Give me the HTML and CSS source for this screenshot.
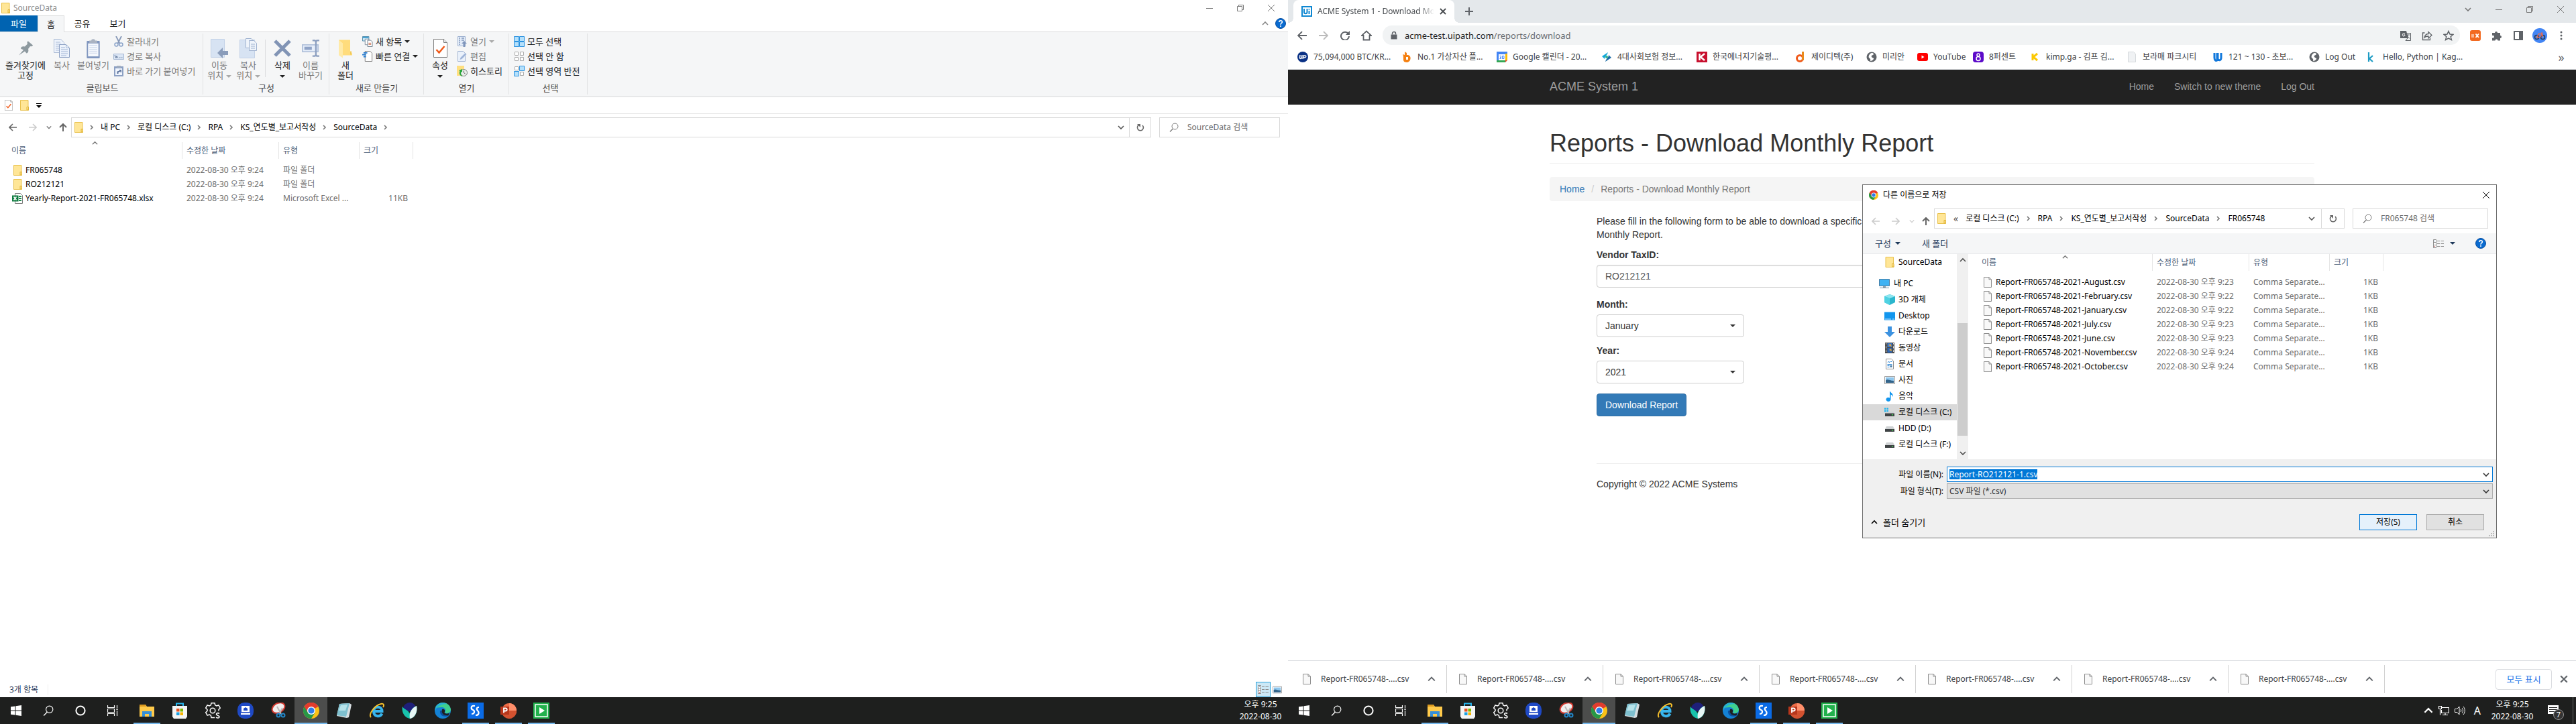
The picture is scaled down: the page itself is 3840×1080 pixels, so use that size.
FILE: index.html
```html
<!DOCTYPE html>
<html lang="ko">
<head>
<meta charset="utf-8">
<title>ACME System 1 - Download Monthly Report</title>
<link rel="stylesheet" href="styles.css">
</head>
<body>
<svg class="sprite" aria-hidden="true">
  <symbol id="folder" viewBox="0 0 13 16"><path d="M.5 .5h11.500v11h.5v4H.5z" fill="#ffe697" stroke="#e9c14c"/><path d="M10 15V10.500h2.500V15z" fill="#ffe28a" stroke="#e0b438"/></symbol>
  <symbol id="doc" viewBox="0 0 12 16"><path d="M.5 .5h7.500l3.500 3.500v11.500H.5z" fill="#f8f8f8" stroke="#8c8c8c"/><path d="M8 .5V4h3.500" fill="none" stroke="#8c8c8c"/></symbol>
  <symbol id="excel" viewBox="0 0 16 16"><path d="M4.500 .5h8l3 3v12h-11z" fill="#fff" stroke="#7a7a7a"/><path d="M10 5h4M10 8h4M10 11h4" stroke="#1d8a50" stroke-width="2"/><path d="M0 3.500h9.500v9H0z" fill="#107c41"/><path d="M2.500 5.500l4 5M6.500 5.500l-4 5" stroke="#fff" stroke-width="1.500"/></symbol>
  <symbol id="check" viewBox="0 0 21 28"><path d="M.5 .5h15l5 5v22H.5z" fill="#fff" stroke="#7d7d7d"/><path d="M15.500 .5v5h5" fill="#e6e6e6" stroke="#7d7d7d"/><path d="M4.500 16l4 4.500 8-9.500" fill="none" stroke="#f05a1a" stroke-width="2.500"/></symbol>
  <symbol id="pin" viewBox="0 0 21 21"><path d="M0 21l7-8-4-2c0-3 3-4 6-3l4-4c-1-2-.5-4 1-4l7 6c-.5 1.500-2 2-4 1.500l-3 4c1 3 0 6-2.500 6.500L9 15z" fill="#8d999f"/></symbol>
  <symbol id="copy" viewBox="0 0 24 28"><path d="M.5 .5h10l5 5v15H.5z" fill="#eef3fb" stroke="#a9b9d4"/><path d="M3 5h7M3 8h8M3 11h5M3 14h5M3 17h5" stroke="#a9bbd8"/><path d="M8.500 8.500h10l5 5v14h-15z" fill="#edf3fc" stroke="#8da1c4"/><path d="M18.500 8.500v5h5M11 13h6M11 16h10M11 19h10M11 22h10M11 25h8" fill="none" stroke="#9fb2d4"/></symbol>
  <symbol id="paste" viewBox="0 0 20 30"><rect y="3" width="20" height="27" rx="1" fill="#8096bf"/><path d="M2 7h16v20H2z" fill="#f5f8fd"/><path d="M4 2.500h3c0-3 6-3 6 0h3v4H4z" fill="#aab3c2"/><path d="M4 10h12M4 13h12M4 16h12M4 19h12M4 22h12" stroke="#cad6e9"/></symbol>
  <symbol id="cut" viewBox="0 0 14 16"><path d="M3 0l5.500 11M11 0L5.500 11" stroke="#8899b8" stroke-width="1.800"/><circle cx="3.500" cy="12.500" r="2.500" fill="none" stroke="#8ba3c9" stroke-width="1.500"/><circle cx="10.500" cy="12.500" r="2.500" fill="none" stroke="#8ba3c9" stroke-width="1.500"/></symbol>
  <symbol id="pathcopy" viewBox="0 0 16 16"><path d="M.5 4.500h15v8H.5z" fill="#dce7f6" stroke="#a3b6d3"/><path d="M2 6l2 4.500 1-3 2 3M9 10h1.500M12 10h1.500" fill="none" stroke="#5d7396"/></symbol>
  <symbol id="shortcut" viewBox="0 0 14 16"><rect y="1" width="14" height="15" fill="#8ca0c3"/><path d="M2 4h10v10H2z" fill="#f0f5fd"/><path d="M4 0h6v3H4z" fill="#a1adbf"/><path d="M4.500 12V8.500L8 7.500V6h3v4H9.500V8.500L6.500 10v2z" fill="#60779f"/></symbol>
  <symbol id="moveto" viewBox="0 0 26 28"><path d="M.5 .5h20v27H.5z" fill="#d7e3f3" stroke="#c2d1e7"/><path d="M10 21l8-8v5h8v6h-8v5z" fill="#8a9cba"/></symbol>
  <symbol id="copyto" viewBox="0 0 26 30"><path d="M.5 2.500h22v27H.5z" fill="#d7e3f3" stroke="#c2d1e7"/><path d="M9.500 .5h8l3 3v11h-11z" fill="#eff4fb" stroke="#9eb1cf"/><path d="M14.500 3.500h7l4 4v11h-11z" fill="#eff4fb" stroke="#9eb1cf"/><path d="M17 9h6M17 12h6M17 15h6" stroke="#9eb1cf"/></symbol>
  <symbol id="delete" viewBox="0 0 26 26"><path d="M2 2l22 22M24 2L2 24" stroke="#8194b5" stroke-width="5"/></symbol>
  <symbol id="rename" viewBox="0 0 28 28"><path d="M1 8.500h25v11H1z" fill="#e6eefa" stroke="#b2c2db" stroke-width="2"/><path d="M4 11.500h12v5H4z" fill="#8fa3c7"/><path d="M17 1.500h4l1.500 2 1.500-2h4M17 26.500h4l1.500-2 1.500 2h4M22.500 3v22" fill="none" stroke="#8c9fc0" stroke-width="2.500"/></symbol>
  <symbol id="newfolder" viewBox="0 0 20 28"><path d="M0 1h17v20h3v3H5z" fill="#ffdc7c"/><path d="M0 1l6 5v22l-6-4z" fill="#ffeaa8"/><path d="M17 18h2v5h-2z" fill="#f2c957"/></symbol>
  <symbol id="newitem" viewBox="0 0 17 17"><path d="M.5 .5h10v7H.5z" fill="#cfe9f7" stroke="#4c88a8"/><path d="M1 1h9v2H1z" fill="#3f9ed0"/><path d="M4.500 4.500h6v9h-6z" fill="#fff" stroke="#7b8b99"/><path d="M8.500 6.500h5l2.500 2.500v7.500H8.500z" fill="#fff" stroke="#6f7f8c"/><path d="M10 11h4M10 13h4" stroke="#c65b36"/></symbol>
  <symbol id="quick" viewBox="0 0 17 17"><path d="M4.500 .5h8l3 3v13h-11z" fill="#fff" stroke="#777"/><path d="M2 3h6M0 6h6M2 9h4" stroke="#1c77d0" stroke-width="2"/></symbol>
  <symbol id="openi" viewBox="0 0 14 16"><path d="M.5 .5h11v14H.5z" fill="#e3ecf9" stroke="#9db0d0"/><path d="M2 3h2M6 3h4M2 6h2M6 6h4M2 9h2M2 12h2" stroke="#8196bb" stroke-width="1.500"/><path d="M10 7l4 4h-2.500v5h-3v-5H6z" fill="#7f95bb"/></symbol>
  <symbol id="edit" viewBox="0 0 14 16"><path d="M.5 .5h8l3 3v12H.5z" fill="#eaf1fb" stroke="#a2b4d2"/><path d="M3.500 13l1-3 7-7 2 2-7 7z" fill="#9fb4d8"/></symbol>
  <symbol id="history" viewBox="0 0 16 16"><path d="M0 0h11v15H0z" fill="#ffdf80"/><circle cx="10.500" cy="10.500" r="5" fill="#e9eeea" stroke="#7c8580"/><path d="M10.500 7.500v3l2 1.500" fill="none" stroke="#555"/><path d="M9 16c-5-.5-6-5-4.500-8L3 7l5-2v5l-1.500-1C5.500 12 6 14 9 16z" fill="#28a83e"/></symbol>
  <symbol id="selall" viewBox="0 0 16 16"><path d="M.5 .5h7v7h-7zM8.500 .5h7v7h-7zM.5 8.500h7v7h-7zM8.500 8.500h7v7h-7z" fill="#b5e0fb" stroke="#2b93e0"/></symbol>
  <symbol id="selnone" viewBox="0 0 16 16"><path d="M1.500 1.500h5v5h-5zM9.500 1.500h5v5h-5zM1.500 9.500h5v5h-5zM9.500 9.500h5v5h-5z" fill="#fff" stroke="#a9a9a9"/></symbol>
  <symbol id="selinv" viewBox="0 0 16 16"><path d="M1.500 1.500h5v5h-5zM9.500 9.500h5v5h-5z" fill="#fff" stroke="#a9a9a9"/><path d="M8.500 .5h7v7h-7zM.5 8.500h7v7h-7z" fill="#b5e0fb" stroke="#2b93e0"/></symbol>
  <symbol id="left" viewBox="0 0 12 12"><path d="M6 1L1 6l5 5M1 6h11" fill="none" stroke="currentColor" stroke-width="1.600"/></symbol>
  <symbol id="right" viewBox="0 0 12 12"><path d="M6 1l5 5-5 5M11 6H0" fill="none" stroke="currentColor" stroke-width="1.600"/></symbol>
  <symbol id="up" viewBox="0 0 12 12"><path d="M1 6l5-5 5 5M6 1v11" fill="none" stroke="currentColor" stroke-width="2"/></symbol>
  <symbol id="down" viewBox="0 0 10 10"><path d="M1 3l4 4 4-4" fill="none" stroke="currentColor" stroke-width="1.600"/></symbol>
  <symbol id="upc" viewBox="0 0 10 10"><path d="M1 7l4-4 4 4" fill="none" stroke="currentColor" stroke-width="1.600"/></symbol>
  <symbol id="sep" viewBox="0 0 6 8"><path d="M1 1l3 3-3 3" fill="none" stroke="#777" stroke-width="1.600"/></symbol>
  <symbol id="tri" viewBox="0 0 8 4"><path d="M0 0h8L4 4z" fill="currentColor"/></symbol>
  <symbol id="refresh" viewBox="0 0 12 12"><path d="M3.500 2.500A4.500 4.500 0 1 0 9 3" fill="none" stroke="#666" stroke-width="1.600"/><path d="M1 1h5v5z" fill="#666"/></symbol>
  <symbol id="search" viewBox="0 0 14 14"><circle cx="8.500" cy="5.500" r="4.500" fill="none" stroke="currentColor"/><path d="M5.500 9L1 13.500" stroke="currentColor" stroke-width="1.200"/></symbol>
  <symbol id="close" viewBox="0 0 10 10"><path d="M0 0l10 10M10 0L0 10" stroke="currentColor"/></symbol>
  <symbol id="closeb" viewBox="0 0 10 10"><path d="M1 1l8 8M9 1L1 9" stroke="currentColor" stroke-width="1.800"/></symbol>
  <symbol id="min" viewBox="0 0 10 10"><path d="M0 5.500h10" stroke="currentColor"/></symbol>
  <symbol id="restore" viewBox="0 0 10 10"><path d="M.5 2.500h7v7h-7zM2.500 2.500v-2h7v7h-2" fill="none" stroke="currentColor"/></symbol>
  <symbol id="help" viewBox="0 0 16 16"><circle cx="8" cy="8" r="7.500" fill="#0a6bd0" stroke="#0b4f9e"/><path d="M5.800 6c0-3 4.600-3 4.600-.3C10.400 7.500 8 7.500 8 9.800M8 11v2" fill="none" stroke="#fff" stroke-width="1.600"/></symbol>
  <symbol id="viewlist" viewBox="0 0 16 13"><path d="M.5 .5h4v12h-4zM.5 4.500h4M.5 8.500h4" fill="#fff" stroke="#8b8b8b"/><path d="M6 2.500h4M11.500 2.500H16M6 6.500h4M11.500 6.500H16M6 10.500h4M11.500 10.500H16" stroke="#8b8b8b"/><path d="M2 2h1v1H2z" fill="#3a87c8"/><path d="M2 10h1v1H2z" fill="#d33"/></symbol>
  <symbol id="picture" viewBox="0 0 16 12"><path d="M.5 .5h15v11H.5z" fill="#fff" stroke="#9b9b9b"/><path d="M2 2h12v8H2z" fill="#8fc7ee"/><path d="M2 6c3-2 6 1 12 1v3H2z" fill="#33648a"/></symbol>
  <symbol id="pc" viewBox="0 0 16 16"><path d="M.5 1.500h15v10H.5z" fill="#3eb2f3" stroke="#4b7ea3"/><path d="M6 12h4v2H6z" fill="#9aa6ae"/><path d="M1 14.500h14" stroke="#6d8ea5"/></symbol>
  <symbol id="cube" viewBox="0 0 16 16"><path d="M8 0l8 3v9l-8 4-8-4V3z" fill="#2bb6cd"/><path d="M8 0l8 3-8 3-8-3z" fill="#8ee6f0"/><path d="M0 3l8 3v10l-8-4z" fill="#4fd2e2"/></symbol>
  <symbol id="desk" viewBox="0 0 16 16"><path d="M0 2.500h16v12H0z" fill="#1296ee"/><path d="M1 13h9M12 13h3" stroke="#bfe4ff"/></symbol>
  <symbol id="dl" viewBox="0 0 16 16"><path d="M5 0h6v8h5l-8 8-8-8h5z" fill="#3c92e0"/></symbol>
  <symbol id="video" viewBox="0 0 14 16"><path d="M0 0h14v16H0z" fill="#4a4a4a"/><path d="M3.500 1h7v6h-7z" fill="#3e78c7"/><path d="M3.500 8h7v7h-7z" fill="#2d66b3"/><path d="M5 4l3-2 2 4zM6 11l3-2 1 4z" fill="#f2a72e"/><path d="M1.500 1v14M12.500 1v14" stroke="#fff" stroke-dasharray="1 1"/></symbol>
  <symbol id="docs" viewBox="0 0 12 16"><path d="M.5 .5h8l3 3v12H.5z" fill="#fff" stroke="#8c8c8c"/><path d="M3 6l1.500-2 1.500 2M7 4.500h2.500M2.500 8.500h7M2.500 10.500h3M2.500 12.500h3" fill="none" stroke="#2f87d6"/><path d="M6.500 10h3v3h-3z" fill="#4a7ea8"/></symbol>
  <symbol id="music" viewBox="0 0 12 16"><path d="M6 0c1 3 6 4 4.500 9C10 6.500 9 6 7.500 5.500V13a3.500 3 0 1 1-1.500-2.500z" fill="#1296ee"/></symbol>
  <symbol id="drive" viewBox="0 0 16 16"><path d="M3 5h10l2 4H1z" fill="#cfd2d4"/><path d="M1 9h14v4H1z" fill="#3f4345"/><path d="M11 10h2v1.500h-2z" fill="#3fd34c"/></symbol>
  <symbol id="cdrive" viewBox="0 0 16 16"><path d="M0 1.500h2.500V4H0zM3.500 1.500H6V4H3.500zM0 5h2.500v2.500H0zM3.500 5H6v2.500H3.500z" fill="#1fb5ee"/><path d="M4 7h9l2 3H1z" fill="#cfd2d4"/><path d="M1 9.500h14V14H1z" fill="#3f4345"/><path d="M11 11h2v1.500h-2z" fill="#3fd34c"/></symbol>
  <symbol id="chrome" viewBox="0 0 24 24"><circle cx="12" cy="12" r="12" fill="#fbc116"/><path d="M12 12L1.600 6A12 12 0 0 1 22.400 6z" fill="#e33b2e"/><path d="M12 12L1.600 6A12 12 0 0 0 12 24l5.500-9z" fill="#279847"/><path d="M12 6h10.400A12 12 0 0 0 1.600 6L7 15z" fill="#e33b2e"/><circle cx="12" cy="12" r="6" fill="#fff"/><circle cx="12" cy="12" r="4.600" fill="#2f7de9"/></symbol>
  <symbol id="globe" viewBox="0 0 16 16"><circle cx="8" cy="8" r="7.500" fill="#5f6368"/><path d="M8 2c3 0 4 2 2 3S7 6 8 8s4 1 3 3-3 3-5 3c1-3-1-4-2-5s0-6 4-7z" fill="#fff"/></symbol>
  <symbol id="win" viewBox="0 0 16 16"><path d="M0 2.300L6.500 1.400v6.100H0zM7.500 1.200L16 0v7.500H7.500zM0 8.500h6.500v6.100L0 13.700zM7.500 8.500H16V16l-8.500-1.200z" fill="#fff"/></symbol>
  <symbol id="cortana" viewBox="0 0 16 16"><circle cx="8" cy="8" r="6.600" fill="none" stroke="#fff" stroke-width="2"/></symbol>
  <symbol id="taskview" viewBox="0 0 16 16"><path d="M.5 0v3.500h10V0M.5 16v-3.500h10V16M.5 5.500h10v5H.5zM14.500 0v4M14.500 8v8" fill="none" stroke="#fff" stroke-width="1.200"/><path d="M13.500 5h2v2h-2z" fill="#fff"/></symbol>
  <symbol id="explorer" viewBox="0 0 24 24"><path d="M1 3h9l2 3h11v15H1z" fill="#ffca4b"/><path d="M1 3h9l1 3H1z" fill="#dc9a1e"/><path d="M5 21v-8h14v8h-4v-4H9v4z" fill="#378fd8"/></symbol>
  <symbol id="store" viewBox="0 0 24 24"><path d="M7 5V1.500h10V5" fill="none" stroke="#27b6ee" stroke-width="2"/><path d="M1 5h22v16l-2 3H3l-2-3z" fill="#f5f5f5"/><path d="M7 9h4.500v4.500H7z" fill="#e8501f"/><path d="M12.500 9H17v4.500h-4.500z" fill="#7cb800"/><path d="M7 14.500h4.500V19H7z" fill="#1ba1e2"/><path d="M12.500 14.500H17V19h-4.500z" fill="#f8b500"/></symbol>
  <symbol id="gear" viewBox="0 0 24 24"><path d="M15 22.500h-5l-.7-3.300-2-1.200-3.200 1-2.400-4.200L4 12.500v-2L1.700 8.200 4 4l3.300 1 2-1.200L10 .8h5l.7 3 2 1.200 3.200-1 2.400 4.200-2.300 2.300v2" fill="none" stroke="#fff" stroke-width="1.500"/><circle cx="12" cy="12" r="3.800" fill="none" stroke="#fff" stroke-width="1.500"/><path d="M22 16.500c-2-1.500-4.500-.8-4.500 1s4.500 1.500 4.500 3.700-3 2.300-5 1" fill="none" stroke="#fff" stroke-width="1.600"/></symbol>
  <symbol id="bluepc" viewBox="0 0 24 24"><rect width="24" height="24" rx="10" fill="#1f49c4"/><path d="M6 5h12v9H6zM5 15.500h14V18H5z" fill="#fff"/><path d="M9 9l3-2 3 2v3H9z" fill="#1f49c4"/></symbol>
  <symbol id="snip" viewBox="0 0 24 24"><ellipse cx="12" cy="8" rx="10" ry="7" transform="rotate(-30 12 8)" fill="#f1eeee" stroke="#d33a31" stroke-width="2"/><path d="M10 6l6 11M18 8l-5 9" stroke="#b9b9b9" stroke-width="2"/><circle cx="12" cy="19" r="2.500" fill="none" stroke="#2387c9" stroke-width="2"/><circle cx="19" cy="19" r="2.500" fill="none" stroke="#2387c9" stroke-width="2"/></symbol>
  <symbol id="notepad" viewBox="0 0 24 24"><path d="M5 2l15-1 3 2-4 19-3 1L1 20z" fill="#d6dde0"/><path d="M5 2l15-1-5 20L1 19z" fill="#7fc0cf"/><path d="M7 4l10-1-3 9H4z" fill="#b7e3ea"/></symbol>
  <symbol id="ie" viewBox="0 0 24 24"><path d="M19.500 16.500c-3 5.500-12.500 5-12.500-3.500 0-8.500 12.500-8.500 12.500 0H8" fill="none" stroke="#38b6ee" stroke-width="4"/><path d="M3 22C-1 18 8 4 18 2c4-.8 5 2 3 5" fill="none" stroke="#f6c02c" stroke-width="2"/></symbol>
  <symbol id="whale" viewBox="0 0 24 24"><path d="M2 7C6-2 17-2 20 5l-7 8C7 13 4 11 2 7z" fill="#1e1f79"/><path d="M1 6c3 5 9 5 10 10 3-3 4-9 11-11 2 10-3 18-10 19C4 23-1 14 1 6z" fill="#18c3ac"/><path d="M12 24c-2-9 3-16 10-19 2 9-3 18-10 19z" fill="#e7f6f5"/></symbol>
  <symbol id="edge" viewBox="0 0 24 24"><circle cx="12" cy="12" r="12" fill="#1482d6"/><path d="M1 8C5-3 22-2 24 10c0 6-6 7-9 5 3-4 0-8-5-8-4 0-7 1-9 1z" fill="#3fd08e"/><path d="M1 8C3 1 12-2 18 2 10 2 3 6 0 13z" fill="#27b2d4"/><path d="M8 12c-1 8 7 11 14 7l-2-1c-5 1-9-1-9-6z" fill="#0c4f9f"/><path d="M11 10c4-1 5 2 3.500 5 2 2 5 2 8 0l-2 4C15 20 9 17 11 10z" fill="#1f1f1f"/></symbol>
  <symbol id="studio" viewBox="0 0 24 24"><path d="M0 0h24v24H0z" fill="#0a6be6"/><path d="M11 5c-7-1-6 5-3 6s3 6-2 6M17 7c-4 0-4 3-2 5s3 7-3 7" fill="none" stroke="#fff" stroke-width="2.200"/></symbol>
  <symbol id="ppt" viewBox="0 0 24 24"><circle cx="13" cy="12" r="11" fill="#ed6c47"/><path d="M13 12h11a11 11 0 0 1-22 2z" fill="#d35230"/><path d="M13 1a11 11 0 0 1 11 11H13z" fill="#ff8f6b"/><path d="M0 6h13v12H0z" fill="#b7361b"/><path d="M5 15.500v-7h2.500c3 0 3 4 0 4H5" fill="none" stroke="#fff" stroke-width="1.800"/></symbol>
  <symbol id="play" viewBox="0 0 24 24"><path d="M0 0h24v24H0z" fill="#22b14c"/><path d="M3 3h18v18H3z" fill="none" stroke="#fff" stroke-width="1.500"/><path d="M9 7l8 5-8 5z" fill="#fff"/></symbol>
</svg>

<section class="screen">
  <header class="x-title"><svg class="folder"><use href="#folder"/></svg><span>SourceData</span>
    <div class="winbtns"><button aria-label="최소화"><svg class="i10"><use href="#min"/></svg></button><button aria-label="이전 크기로"><svg class="i10"><use href="#restore"/></svg></button><button aria-label="닫기"><svg class="i10"><use href="#close"/></svg></button></div>
  </header>
  <nav class="x-tabs"><button class="file">파일</button><button class="on">홈</button><button>공유</button><button>보기</button>
    <div class="tabend"><svg class="i10"><use href="#upc"/></svg><svg class="i16"><use href="#help"/></svg></div></nav>
  <div class="ribbon">
    <div class="group g1"><div class="tools">
      <button class="big b72"><span class="art"><svg class="s21"><use href="#pin"/></svg></span>즐겨찾기에<br>고정</button>
      <button class="big b36 off"><span class="art"><svg class="s24"><use href="#copy"/></svg></span>복사</button>
      <button class="big b58 off"><span class="art"><svg class="s20"><use href="#paste"/></svg></span>붙여넣기</button>
      <div class="small off"><button><svg class="i16"><use href="#cut"/></svg>잘라내기</button><button><svg class="i16"><use href="#pathcopy"/></svg>경로 복사</button><button><svg class="i16"><use href="#shortcut"/></svg>바로 가기 붙여넣기</button></div>
    </div><div class="caption">클립보드</div></div>
    <div class="group g2"><div class="tools">
      <button class="big b48 off"><span class="art"><svg class="s26"><use href="#moveto"/></svg></span>이동<br>위치 <svg class="tri"><use href="#tri"/></svg></button>
      <button class="big b38 off"><span class="art"><svg class="s26"><use href="#copyto"/></svg></span>복사<br>위치 <svg class="tri"><use href="#tri"/></svg></button>
      <span class="rule"></span>
      <button class="big b48"><span class="art"><svg class="s26"><use href="#delete"/></svg></span>삭제<br><svg class="tri"><use href="#tri"/></svg></button>
      <button class="big b36 off"><span class="art"><svg class="s26"><use href="#rename"/></svg></span>이름<br>바꾸기</button>
    </div><div class="caption">구성</div></div>
    <div class="group g3"><div class="tools">
      <button class="big b48"><span class="art"><svg class="s20"><use href="#newfolder"/></svg></span>새<br>폴더</button>
      <div class="small"><button><svg class="i16"><use href="#newitem"/></svg>새 항목 <svg class="tri"><use href="#tri"/></svg></button><button><svg class="i16"><use href="#quick"/></svg>빠른 연결 <svg class="tri"><use href="#tri"/></svg></button></div>
    </div><div class="caption">새로 만들기</div></div>
    <div class="group g4"><div class="tools">
      <button class="big b48"><span class="art"><svg class="s21"><use href="#check"/></svg></span>속성<br><svg class="tri"><use href="#tri"/></svg></button>
      <div class="small"><button class="off"><svg class="i16"><use href="#openi"/></svg>열기 <svg class="tri"><use href="#tri"/></svg></button><button class="off"><svg class="i16"><use href="#edit"/></svg>편집</button><button><svg class="i16"><use href="#history"/></svg>히스토리</button></div>
    </div><div class="caption">열기</div></div>
    <div class="group g5"><div class="tools">
      <div class="small"><button><svg class="i16"><use href="#selall"/></svg>모두 선택</button><button><svg class="i16"><use href="#selnone"/></svg>선택 안 함</button><button><svg class="i16"><use href="#selinv"/></svg>선택 영역 반전</button></div>
    </div><div class="caption">선택</div></div>
  </div>
  <div class="qat"><svg class="doc"><use href="#check"/></svg><svg class="folder"><use href="#folder"/></svg><svg class="qmore" viewBox="0 0 8 7"><path d="M0 .5h8" stroke="#000"/><path d="M0 3h8L4 7z"/></svg></div>
  <div class="addrrow">
    <div class="navs"><svg class="i12"><use href="#left"/></svg><svg class="i12 dim"><use href="#right"/></svg><svg class="i8"><use href="#down"/></svg><svg class="i12"><use href="#up"/></svg></div>
    <div class="crumbs"><svg class="folder"><use href="#folder"/></svg><svg class="sep"><use href="#sep"/></svg><span>내 PC</span><svg class="sep"><use href="#sep"/></svg><span>로컬 디스크 (C:)</span><svg class="sep"><use href="#sep"/></svg><span>RPA</span><svg class="sep"><use href="#sep"/></svg><span>KS_연도별_보고서작성</span><svg class="sep"><use href="#sep"/></svg><span>SourceData</span><svg class="sep"><use href="#sep"/></svg><svg class="i10 end"><use href="#down"/></svg></div>
    <button class="reload" aria-label="새로 고침"><svg class="i12"><use href="#refresh"/></svg></button>
    <label class="find"><svg class="i14"><use href="#search"/></svg><input type="text" placeholder="SourceData 검색" aria-label="검색"></label>
  </div>
  <main class="x-main">
    <svg class="sort"><use href="#upc"/></svg>
    <table class="files">
      <colgroup><col class="c-name"><col class="c-date"><col class="c-type"><col class="c-size"></colgroup>
      <thead><tr><th><div>이름</div></th><th><div>수정한 날짜</div></th><th><div>유형</div></th><th><div>크기</div></th></tr></thead>
      <tbody>
        <tr><td><span class="fn"><svg class="folder"><use href="#folder"/></svg>FR065748</span></td><td>2022-08-30 오후 9:24</td><td>파일 폴더</td><td></td></tr>
        <tr><td><span class="fn"><svg class="folder"><use href="#folder"/></svg>RO212121</span></td><td>2022-08-30 오후 9:24</td><td>파일 폴더</td><td></td></tr>
        <tr><td><span class="fn"><svg class="xl"><use href="#excel"/></svg>Yearly-Report-2021-FR065748.xlsx</span></td><td>2022-08-30 오후 9:24</td><td>Microsoft Excel ...</td><td>11KB</td></tr>
      </tbody>
    </table>
  </main>
  <footer class="status"><span class="count">3개 항목</span><button class="viewbtn" aria-label="자세히"><svg class="vl"><use href="#viewlist"/></svg></button><button class="thumbbtn" aria-label="큰 아이콘"><svg class="pic"><use href="#picture"/></svg></button></footer>
  <div class="taskbar">
    <div class="pins">
      <span><svg class="i16"><use href="#win"/></svg></span><span><svg class="i16 white"><use href="#search"/></svg></span><span><svg class="i16"><use href="#cortana"/></svg></span><span><svg class="i16"><use href="#taskview"/></svg></span>
    </div>
    <div class="apps">
      <span class="run"><svg><use href="#explorer"/></svg></span><span><svg><use href="#store"/></svg></span><span><svg><use href="#gear"/></svg></span><span><svg><use href="#bluepc"/></svg></span><span><svg><use href="#snip"/></svg></span><span class="active"><svg><use href="#chrome"/></svg></span><span><svg><use href="#notepad"/></svg></span><span><svg><use href="#ie"/></svg></span><span><svg><use href="#whale"/></svg></span><span><svg><use href="#edge"/></svg></span><span class="run"><svg><use href="#studio"/></svg></span><span class="run"><svg><use href="#ppt"/></svg></span><span class="run"><svg><use href="#play"/></svg></span>
    </div>
    <div class="tray"><div class="clock">오후 9:25<br>2022-08-30</div></div>
  </div>
</section>

<section class="screen chrome">
  <div class="strip">
    <div class="tab"><svg class="i16" viewBox="0 0 16 16"><path d="M1 1h14v14H1z" fill="#fff" stroke="#0d87d2" stroke-width="2"/><path d="M4 4v5c0 3 4.500 3 4.500 0V4M11.500 7v5M11.500 4v1.500" fill="none" stroke="#0d87d2" stroke-width="2"/></svg><span>ACME System 1 - Download Mo</span><button aria-label="탭 닫기"><svg class="i10"><use href="#closeb"/></svg></button></div>
    <button class="plus" aria-label="새 탭"><svg class="i12" viewBox="0 0 12 12"><path d="M6 0v12M0 6h12" stroke="#5f6368" stroke-width="2"/></svg></button>
    <div class="winbtns"><button aria-label="탭 검색"><svg class="i10"><use href="#down"/></svg></button><button aria-label="최소화"><svg class="i10"><use href="#min"/></svg></button><button aria-label="이전 크기로"><svg class="i10"><use href="#restore"/></svg></button><button aria-label="닫기"><svg class="i10"><use href="#close"/></svg></button></div>
  </div>
  <div class="toolbar">
    <button aria-label="뒤로"><svg class="i14"><use href="#left"/></svg></button><button class="dim" aria-label="앞으로"><svg class="i14"><use href="#right"/></svg></button><button aria-label="새로고침"><svg class="i14" viewBox="0 0 14 14"><path d="M12 4.500A6 6 0 1 0 13 8" fill="none" stroke="currentColor" stroke-width="2"/><path d="M14 0v6H8z" fill="currentColor"/></svg></button><button aria-label="홈"><svg class="i16" viewBox="0 0 16 16"><path d="M8 1.500L1 8h2.500v6.500h9V8H15z" fill="none" stroke="currentColor" stroke-width="1.800"/></svg></button>
    <div class="omni"><svg class="lock" viewBox="0 0 10 12"><path d="M1 5h8.500v7H.5V5z" fill="#5f6368"/><path d="M2.500 5V3.500a2.500 2.500 0 0 1 5 0V5" fill="none" stroke="#5f6368" stroke-width="1.500"/></svg><span class="url"><b>acme-test.uipath.com</b>/reports/download</span>
      <div class="acts"><svg class="i16" viewBox="0 0 16 16"><path d="M0 1h9l3 11H0z" fill="#5f6368"/><path d="M8 4.500h7.500v11H8l3-3.500M9 7h5M11.500 7c0 3-1 4-2.500 5M10 8.500l4 4" fill="none" stroke="#5f6368"/><path d="M7 5C3 3 2 9 5 9c2 0 2-2 2-2H5" fill="none" stroke="#fff"/></svg><svg class="i16" viewBox="0 0 16 16"><path d="M4.500 4H1.500v10.500h11v-3M4 11c1-4 3-5.500 6-5.500V2.500l5 5-5 4.500V9c-3 0-4 0-6 2z" fill="none" stroke="#5f6368" stroke-width="1.300"/></svg><svg class="i16" viewBox="0 0 16 16"><path d="M8 1.500l2 4.500 5 .4-3.800 3.200 1.200 4.900L8 12l-4.400 2.500 1.200-4.900L1 6.400 6 6z" fill="none" stroke="#5f6368" stroke-width="1.500"/></svg></div></div>
    <div class="exts"><svg class="i16" viewBox="0 0 16 16"><rect width="16" height="16" rx="3" fill="#f26a21"/><path d="M2 6h4v5H2z" fill="#fff" opacity=".5"/><path d="M8.500 5.500l4.500 5.500M13 5.500L8.500 11" stroke="#fff" stroke-width="1.800"/></svg><svg class="i16" viewBox="0 0 16 16"><path d="M1 4h4a2 2 0 1 1 4 0h4v4a2 2 0 1 1 0 4v3.500H9.500a2 2 0 1 0-4 0H1v-4a2 2 0 1 0 0-3.500z" fill="#5f6368"/></svg><svg class="i16" viewBox="0 0 16 16"><path d="M2 2h12v12H2z" fill="none" stroke="#5f6368" stroke-width="2"/><path d="M9 2h5v12H9z" fill="#5f6368"/></svg><svg class="i22" viewBox="0 0 22 22"><circle cx="11" cy="11" r="11" fill="#4285f4"/><circle cx="6.500" cy="13.500" r="3" fill="none" stroke="#273b55" stroke-width="1.500"/><circle cx="15.500" cy="13.500" r="3" fill="none" stroke="#273b55" stroke-width="1.500"/><path d="M6.500 13.500l3-5h5l-3 5zM14 6l1.500 7.500" fill="none" stroke="#ef6b4b" stroke-width="1.300"/></svg><svg class="i16" viewBox="0 0 16 16"><circle cx="8" cy="3" r="1.500" fill="#5f6368"/><circle cx="8" cy="8" r="1.500" fill="#5f6368"/><circle cx="8" cy="13" r="1.500" fill="#5f6368"/></svg></div>
  </div>
  <div class="marks">
    <a href="#"><svg class="i16" viewBox="0 0 16 16"><circle cx="8" cy="8" r="8" fill="#0a3185"/><path d="M4 5L3.500 9c0 2 2.500 2 3 0L7 5M8 11l1-5h2.500c2 0 1.500 3-.5 3H9" fill="none" stroke="#fff" stroke-width="1.500"/></svg>75,094,000 BTC/KR...</a>
    <a href="#"><svg class="i16" viewBox="0 0 16 16"><path d="M5 0l3 2v3c8-1 7 11 0 11-5 0-5-3-5-5 0-3 0-5-1-7l3 1z" fill="#f58113"/><path d="M7 8h3v4H7z" fill="#fff"/></svg>No.1 가상자산 플...</a>
    <a href="#"><svg class="i16" viewBox="0 0 16 16"><path d="M0 0h16v16H0z" fill="#fff"/><path d="M0 0h16v4H0zM0 0h3v13H0z" fill="#4285f4"/><path d="M13 3h3v10h-3z" fill="#fbbc04"/><path d="M0 13h13v3H0z" fill="#34a853"/><path d="M13 13h3l-3 3z" fill="#ea4335"/><path d="M4.500 6.500h2v4h-2M5 8.500h1.500M8.500 6.500h2.500v4H8.500z" fill="none" stroke="#4285f4"/></svg>Google 캘린더 - 20...</a>
    <a href="#"><svg class="i16" viewBox="0 0 16 16"><path d="M10 1L1 7l4 4c0-4 3-4 5-10z" fill="#12a7d9"/><path d="M6 15l9-6-4-4c0 4-3 4-5 10z" fill="#1769a5"/><circle cx="8" cy="8" r="2" fill="#34b58c"/></svg>4대사회보험 정보...</a>
    <a href="#"><svg class="i16" viewBox="0 0 16 16"><path d="M0 0h16v16H0z" fill="#c8102e"/><path d="M4.500 3v10M12 3L6 8l6 5" fill="none" stroke="#fff" stroke-width="2.500"/></svg>한국에너지기술평...</a>
    <a href="#"><svg class="i16" viewBox="0 0 16 16"><circle cx="7" cy="10" r="4.500" fill="none" stroke="#f05a1a" stroke-width="3"/><path d="M11.500 0v13" stroke="#e98a1a" stroke-width="3"/></svg>제이디텍(주)</a>
    <a href="#"><svg class="i16"><use href="#globe"/></svg>미리안</a>
    <a href="#"><svg class="i16" viewBox="0 0 16 16"><rect y="2" width="16" height="12" rx="3" fill="#f00"/><path d="M6.500 5.500l4 2.500-4 2.500z" fill="#fff"/></svg>YouTube</a>
    <a href="#"><svg class="i16" viewBox="0 0 16 16"><rect width="16" height="16" rx="4" fill="#5c0ac9"/><circle cx="8" cy="5" r="2" fill="none" stroke="#fff" stroke-width="1.500"/><circle cx="8" cy="10.500" r="3" fill="none" stroke="#fff" stroke-width="1.500"/></svg>8퍼센트</a>
    <a href="#"><svg class="i16" viewBox="0 0 16 16"><path d="M4 3v10M11 3L5 8l6 5" fill="none" stroke="#fcc800" stroke-width="3"/></svg>kimp.ga - 김프 김...</a>
    <a href="#"><svg class="i16" viewBox="0 0 16 16"><path d="M2.500 .5h8l3 3v12h-11z" fill="#f0f2f4" stroke="#d5d9dc"/></svg>보라매 파크시티</a>
    <a href="#"><svg class="i16" viewBox="0 0 16 16"><path d="M3 2v7c0 4 2 5 4 4V2M8 2v9c2 3 5 2 5-2V2" fill="none" stroke="#1178dc" stroke-width="3"/></svg>121 ~ 130 - 초보...</a>
    <a href="#"><svg class="i16"><use href="#globe"/></svg>Log Out</a>
    <a href="#"><svg class="i16" viewBox="0 0 16 16"><path d="M3 1v14M9 6l-5 4.500L9 15" fill="none" stroke="#1f9cc4" stroke-width="2.200"/></svg>Hello, Python | Kag...</a>
    <button aria-label="북마크 더보기">»</button>
  </div>
  <div class="page">
    <div class="navbar"><div class="container"><a class="brand" href="#">ACME System 1</a><nav><a href="#">Home</a><a href="#">Switch to new theme</a><a href="#">Log Out</a></nav></div></div>
    <div class="container body">
      <h1>Reports - Download Monthly Report</h1>
      <div class="breadcrumb"><a href="#">Home</a><i>/</i><span>Reports - Download Monthly Report</span></div>
      <div class="inner">
        <form>
          <p>Please fill in the following form to be able to download a specific Monthly Report.</p>
          <label for="tax">Vendor TaxID:</label>
          <input id="tax" class="field" type="text" value="RO212121">
          <label class="gap15" for="month">Month:</label>
          <div class="pick"><select id="month"><option>January</option></select><svg class="tri"><use href="#tri"/></svg></div>
          <label class="gap10" for="year">Year:</label>
          <div class="pick"><select id="year"><option>2021</option></select><svg class="tri"><use href="#tri"/></svg></div>
          <button class="primary" type="button">Download Report</button>
        </form>
        <footer>Copyright © 2022 ACME Systems</footer>
      </div>
    </div>
  </div>
  <div class="shelf">
    <div class="dlitem"><svg class="doc"><use href="#doc"/></svg>Report-FR065748-....csv<svg class="i12"><use href="#upc"/></svg></div>
    <div class="dlitem"><svg class="doc"><use href="#doc"/></svg>Report-FR065748-....csv<svg class="i12"><use href="#upc"/></svg></div>
    <div class="dlitem"><svg class="doc"><use href="#doc"/></svg>Report-FR065748-....csv<svg class="i12"><use href="#upc"/></svg></div>
    <div class="dlitem"><svg class="doc"><use href="#doc"/></svg>Report-FR065748-....csv<svg class="i12"><use href="#upc"/></svg></div>
    <div class="dlitem"><svg class="doc"><use href="#doc"/></svg>Report-FR065748-....csv<svg class="i12"><use href="#upc"/></svg></div>
    <div class="dlitem"><svg class="doc"><use href="#doc"/></svg>Report-FR065748-....csv<svg class="i12"><use href="#upc"/></svg></div>
    <div class="dlitem"><svg class="doc"><use href="#doc"/></svg>Report-FR065748-....csv<svg class="i12"><use href="#upc"/></svg></div>
    <button class="showall">모두 표시</button><button class="shut" aria-label="닫기"><svg class="i12"><use href="#closeb"/></svg></button>
  </div>
  <div class="taskbar">
    <div class="pins">
      <span><svg class="i16"><use href="#win"/></svg></span><span><svg class="i16 white"><use href="#search"/></svg></span><span><svg class="i16"><use href="#cortana"/></svg></span><span><svg class="i16"><use href="#taskview"/></svg></span>
    </div>
    <div class="apps">
      <span class="run"><svg><use href="#explorer"/></svg></span><span><svg><use href="#store"/></svg></span><span><svg><use href="#gear"/></svg></span><span><svg><use href="#bluepc"/></svg></span><span><svg><use href="#snip"/></svg></span><span class="active"><svg><use href="#chrome"/></svg></span><span><svg><use href="#notepad"/></svg></span><span><svg><use href="#ie"/></svg></span><span><svg><use href="#whale"/></svg></span><span><svg><use href="#edge"/></svg></span><span class="run"><svg><use href="#studio"/></svg></span><span class="run"><svg><use href="#ppt"/></svg></span><span class="run"><svg><use href="#play"/></svg></span>
    </div>
    <div class="tray full"><svg class="i14 white"><use href="#upc"/></svg><svg class="i16" viewBox="0 0 16 16"><path d="M5 3.500h10.500v8H4.500V7M10 11.500v3M6 14.500h8M.5 1.500h4v4h-4zM2.500 5.500v9" fill="none" stroke="#fff" stroke-width="1.200"/></svg><svg class="i16" viewBox="0 0 16 16"><path d="M.5 5.500h3L7 2v12l-3.500-3.500h-3zM9 6c1 1 1 3 0 4M11 4c2 2 2 6 0 8M13 2c3 3.500 3 8.500 0 12" fill="none" stroke="#fff"/></svg><span class="ime">A</span><div class="clock">오후 9:25<br>2022-08-30</div><div class="note"><svg class="i16" viewBox="0 0 16 16"><path d="M0 0h16v13h-4v3l-4-3H0z" fill="#fff"/><path d="M2 3.500h12M2 6.500h12M2 9.500h9" stroke="#222"/></svg><em>7</em></div></div>
  </div>

  <div class="dialog" role="dialog" aria-label="다른 이름으로 저장">
    <header><svg class="i14"><use href="#chrome"/></svg><span>다른 이름으로 저장</span><button aria-label="닫기"><svg class="i10"><use href="#close"/></svg></button></header>
    <div class="addrrow">
      <div class="navs"><svg class="i12 dim"><use href="#left"/></svg><svg class="i12 dim"><use href="#right"/></svg><svg class="i8 dim"><use href="#down"/></svg><svg class="i12"><use href="#up"/></svg></div>
      <div class="crumbs"><svg class="folder"><use href="#folder"/></svg><span class="more">«</span><span>로컬 디스크 (C:)</span><svg class="sep"><use href="#sep"/></svg><span>RPA</span><svg class="sep"><use href="#sep"/></svg><span>KS_연도별_보고서작성</span><svg class="sep"><use href="#sep"/></svg><span>SourceData</span><svg class="sep"><use href="#sep"/></svg><span>FR065748</span><svg class="i10 end"><use href="#down"/></svg></div>
      <button class="reload" aria-label="새로 고침"><svg class="i12"><use href="#refresh"/></svg></button>
      <label class="find"><svg class="i14"><use href="#search"/></svg><input type="text" placeholder="FR065748 검색" aria-label="검색"></label>
    </div>
    <div class="cmds"><button>구성 <svg class="tri"><use href="#tri"/></svg></button><button>새 폴더</button><div class="cmdend"><svg class="vl"><use href="#viewlist"/></svg><svg class="tri"><use href="#tri"/></svg><svg class="i16"><use href="#help"/></svg></div></div>
    <div class="browse">
      <ul class="tree">
        <li class="kid first"><svg class="i16"><use href="#folder"/></svg>SourceData</li>
        <li><svg class="i16"><use href="#pc"/></svg>내 PC</li>
        <li class="kid"><svg class="i16"><use href="#cube"/></svg>3D 개체</li>
        <li class="kid"><svg class="i16"><use href="#desk"/></svg>Desktop</li>
        <li class="kid"><svg class="i16"><use href="#dl"/></svg>다운로드</li>
        <li class="kid"><svg class="i16"><use href="#video"/></svg>동영상</li>
        <li class="kid"><svg class="i16"><use href="#docs"/></svg>문서</li>
        <li class="kid"><svg class="i16"><use href="#picture"/></svg>사진</li>
        <li class="kid"><svg class="i16"><use href="#music"/></svg>음악</li>
        <li class="kid sel"><svg class="i16"><use href="#cdrive"/></svg>로컬 디스크 (C:)</li>
        <li class="kid"><svg class="i16"><use href="#drive"/></svg>HDD (D:)</li>
        <li class="kid"><svg class="i16"><use href="#drive"/></svg>로컬 디스크 (F:)</li>
      </ul>
      <div class="scroll"><svg class="i10"><use href="#upc"/></svg><div class="thumb"></div><svg class="i10"><use href="#down"/></svg></div>
      <div class="list">
        <svg class="sort"><use href="#upc"/></svg>
        <table class="files">
          <colgroup><col class="c-name"><col class="c-date"><col class="c-type"><col class="c-size"></colgroup>
          <thead><tr><th><div>이름</div></th><th><div>수정한 날짜</div></th><th><div>유형</div></th><th><div>크기</div></th></tr></thead>
          <tbody>
            <tr><td><span class="fn"><svg class="doc"><use href="#doc"/></svg>Report-FR065748-2021-August.csv</span></td><td>2022-08-30 오후 9:23</td><td>Comma Separate...</td><td>1KB</td></tr>
            <tr><td><span class="fn"><svg class="doc"><use href="#doc"/></svg>Report-FR065748-2021-February.csv</span></td><td>2022-08-30 오후 9:22</td><td>Comma Separate...</td><td>1KB</td></tr>
            <tr><td><span class="fn"><svg class="doc"><use href="#doc"/></svg>Report-FR065748-2021-January.csv</span></td><td>2022-08-30 오후 9:22</td><td>Comma Separate...</td><td>1KB</td></tr>
            <tr><td><span class="fn"><svg class="doc"><use href="#doc"/></svg>Report-FR065748-2021-July.csv</span></td><td>2022-08-30 오후 9:23</td><td>Comma Separate...</td><td>1KB</td></tr>
            <tr><td><span class="fn"><svg class="doc"><use href="#doc"/></svg>Report-FR065748-2021-June.csv</span></td><td>2022-08-30 오후 9:23</td><td>Comma Separate...</td><td>1KB</td></tr>
            <tr><td><span class="fn"><svg class="doc"><use href="#doc"/></svg>Report-FR065748-2021-November.csv</span></td><td>2022-08-30 오후 9:24</td><td>Comma Separate...</td><td>1KB</td></tr>
            <tr><td><span class="fn"><svg class="doc"><use href="#doc"/></svg>Report-FR065748-2021-October.csv</span></td><td>2022-08-30 오후 9:24</td><td>Comma Separate...</td><td>1KB</td></tr>
          </tbody>
        </table>
      </div>
    </div>
    <div class="savebox">
      <div class="line"><label for="fname">파일 이름(N):</label><div class="combo focus"><input id="fname" type="text" value="Report-RO212121-1.csv"><svg class="i10"><use href="#down"/></svg></div></div>
      <div class="line"><label for="ftype">파일 형식(T):</label><div class="combo"><select id="ftype"><option>CSV 파일 (*.csv)</option></select><svg class="i10"><use href="#down"/></svg></div></div>
      <div class="final"><button class="hide"><svg class="i10"><use href="#upc"/></svg>폴더 숨기기</button><button class="btn save">저장(S)</button><button class="btn">취소</button></div>
      <svg class="grip" viewBox="0 0 8 8"><path d="M6 0h2v2H6zM3 3h2v2H3zM6 3h2v2H6zM0 6h2v2H0zM3 6h2v2H3zM6 6h2v2H6z" fill="#bcbcbc"/></svg>
    </div>
  </div>
</section>
</body>
</html>
```

FILE: styles.css
```css
* { box-sizing: border-box; }
body {
  margin: 0;
  display: flex;
  min-height: 100vh;
  font: 12px/16px "Noto Sans", "Noto Sans CJK KR", sans-serif;
  color: #000;
  background: #fff;
}
button, input, select { font: inherit; color: inherit; margin: 0; padding: 0; border: 0; background: none; }
button { display: inline-flex; align-items: center; justify-content: center; white-space: nowrap; }
a { color: inherit; text-decoration: none; }
svg { flex: none; display: block; }
.sprite { position: absolute; width: 0; height: 0; }
.i8 { width: 8px; height: 8px; }
.i10 { width: 10px; height: 10px; }
.i12 { width: 12px; height: 12px; }
.i14 { width: 14px; height: 14px; }
.i16 { width: 16px; height: 16px; }
.i22 { width: 22px; height: 22px; }
.folder { width: 13px; height: 16px; }
.doc { width: 12px; height: 16px; }
.xl { width: 16px; height: 16px; }
.sep { width: 6px; height: 8px; }
.tri { width: 8px; height: 4px; display: inline-block; }
.white { color: #fff; }

.screen { position: relative; flex: 1 1 0; min-width: 0; display: flex; flex-direction: column; }
.winbtns { margin-left: auto; display: flex; color: #777; }
.winbtns button { width: 46px; height: 28px; }

/* Explorer window */
.x-title { display: flex; align-items: center; height: 23px; padding-left: 2px; gap: 5px; color: #8c8c8c; }
.x-title .winbtns { padding-right: 2px; }
.x-tabs { display: flex; height: 25px; border-bottom: 1px solid #dadbdc; font-size: 13px; }
.x-tabs > button { width: 53px; height: 24px; color: #222; }
.x-tabs .file { width: 56px; background: #0063b1; color: #fff; }
.x-tabs .on { width: 40px; height: 25px; background: #f5f6f7; border: 1px solid #dadbdc; border-bottom: 0; }
.tabend { margin-left: auto; display: flex; align-items: center; gap: 10px; padding-right: 3px; color: #888; }
.ribbon { display: flex; height: 97px; background: #f5f6f7; border-bottom: 1px solid #d7d8d9; font-size: 13px; line-height: 15px; color: #222; }
.group { position: relative; display: flex; flex-direction: column; padding: 2px 0 3px; }
.group::after { content: ""; position: absolute; top: 2px; bottom: 3px; right: 0; width: 1px; background: #e2e3e4; }
.g1 { width: 303px; padding-left: 2px; }
.g2 { width: 188px; }
.g3 { width: 141px; }
.g4 { width: 127px; }
.g5 { width: 117px; padding-left: 6px; }
.tools { display: flex; align-items: flex-start; flex: 1; }
.big { display: block; text-align: center; padding-top: 5px; }
.big .tri { vertical-align: middle; }
.art { display: flex; align-items: center; justify-content: center; height: 34px; margin-bottom: 1px; }
.b36 { width: 36px; }
.b38 { width: 38px; }
.b48 { width: 48px; }
.b58 { width: 58px; }
.b72 { width: 72px; }
.s20 { width: 20px; height: 29px; }
.s21 { width: 21px; height: 28px; }
.s24 { width: 24px; height: 28px; }
.s26 { width: 26px; height: 30px; }
.off { color: #777; }
.off .tri { color: #aaa; }
.small { display: flex; flex-direction: column; padding-top: 1px; }
.small button { height: 22px; gap: 4px; justify-content: flex-start; padding-left: 1px; }
.rule { width: 1px; height: 56px; margin: 9px 1px 0 6px; background: #dcdddf; }
.caption { height: 20px; line-height: 20px; text-align: center; color: #444; }
.qat { display: flex; align-items: center; height: 25px; padding-left: 7px; gap: 11px; border-bottom: 1px solid #e8e8e8; }
.qmore { width: 8px; height: 7px; }
.addrrow { display: flex; height: 35px; padding: 5px 12px 0 13px; }
.navs { display: flex; align-items: center; width: 93px; gap: 18px; color: #666; }
.navs svg + svg + svg { margin-left: -4px; }
.navs svg + svg + svg + svg { margin-left: -7px; }
.navs .dim, .dim { color: #ccc; }
.crumbs { flex: 1; display: flex; align-items: center; gap: 10px; height: 30px; padding: 0 7px 0 4px; border: 1px solid #d9d9d9; }
.end { margin-left: auto; color: #555; }
.reload { width: 32px; height: 30px; border: 1px solid #d9d9d9; border-left: 0; }
.find { display: flex; align-items: center; gap: 13px; width: 180px; height: 30px; margin-left: 12px; padding-left: 14px; border: 1px solid #d9d9d9; color: #777; }
.find input { width: 130px; }
.find input::placeholder { color: #6d6d6d; opacity: 1; }
.x-main { position: relative; flex: 1; padding-top: 7px; }
.sort { position: absolute; left: 137px; top: 4px; width: 9px; height: 9px; color: #777; }
.files { border-collapse: collapse; table-layout: fixed; width: 616px; color: #6d6d6d; }
.c-name { width: 272px; }
.c-date { width: 144px; }
.c-type { width: 120px; }
.c-size { width: 80px; }
.files th { padding: 0 0 6px; font-weight: 400; text-align: left; color: #4c607a; }
.files th div { height: 25px; line-height: 25px; padding-left: 6px; border-right: 1px solid #e5e5e5; }
.files th:first-child div { padding-left: 17px; }
.files td { height: 21px; padding: 0 0 0 6px; white-space: nowrap; }
.files td:first-child { padding-left: 18px; color: #000; }
.files td:last-child { text-align: right; padding-right: 8px; }
.fn { display: flex; align-items: center; gap: 4px; }
.fn .folder, .fn .doc { margin: 0 2px; }
.fn .folder { margin-right: 1px; }
.status { display: flex; align-items: center; height: 23px; padding: 0 7px 0 14px; color: #1e395b; }
.count { width: 58px; margin-right: auto; border-right: 1px solid #eee; }
.vl { width: 16px; height: 13px; }
.pic { width: 14px; height: 12px; }
.viewbtn { width: 22px; height: 23px; background: #cce8f6; border: 1px solid #26a0da; }
.thumbbtn { width: 19px; }

/* Taskbar */
.taskbar { display: flex; height: 40px; background: #1e1f1e; color: #fff; }
.pins, .apps { display: flex; }
.pins { margin-right: 2px; }
.pins span, .apps span { position: relative; display: flex; align-items: center; justify-content: center; width: 48px; }
.apps span { width: 49px; }
.apps svg { width: 24px; height: 24px; }
.apps .active { background: #4c4d4c; }
.apps .run::after, .apps .active::after { content: ""; position: absolute; left: 5px; right: 4px; bottom: 0; height: 2px; background: #76b9ed; }
.apps .active::after { left: 0; right: 0; }
.tray { display: flex; align-items: center; gap: 8px; margin-left: auto; padding-right: 7px; }
.clock { width: 68px; text-align: center; line-height: 18px; white-space: nowrap; }
.full { padding-right: 13px; border-right: 1px solid #666; margin-right: 4px; }
.ime { font-size: 16px; padding: 0 5px; }
.note { position: relative; width: 24px; margin-left: 11px; }
.note em { position: absolute; left: 8px; top: 6px; width: 16px; height: 16px; border: 1px solid #999; border-radius: 50%; background: #333; font-size: 11px; line-height: 14px; font-style: normal; text-align: center; }

/* Browser window */
.strip { display: flex; height: 34px; padding-left: 8px; background: #e4e8eb; }
.tab { position: relative; display: flex; align-items: center; gap: 8px; width: 240px; padding: 0 12px; background: #fff; border-radius: 8px 8px 0 0; color: #45494d; }
.tab::before, .tab::after { content: ""; position: absolute; bottom: 0; left: -8px; width: 8px; height: 8px; background: radial-gradient(circle at 0 0, transparent 8px, #fff 8px); }
.tab::after { left: auto; right: -8px; background: radial-gradient(circle at 100% 0, transparent 8px, #fff 8px); }
.tab span { flex: 1; overflow: hidden; white-space: nowrap; -webkit-mask-image: linear-gradient(to right, #000 88%, transparent); mask-image: linear-gradient(to right, #000 88%, transparent); }
.plus { width: 28px; margin-left: 8px; }
.toolbar { display: flex; align-items: center; height: 36px; padding: 1px 14px 0 5px; color: #5f6368; }
.toolbar > button { width: 32px; height: 28px; }
.toolbar .dim { color: #bbb; }
.omni { flex: 1; display: flex; align-items: center; height: 29px; margin-left: 8px; padding: 0 9px 0 12px; border-radius: 14px; background: #f1f3f4; }
.lock { width: 10px; height: 13px; margin-right: 11px; }
.url { font-size: 13px; flex: 1; color: #6a6e73; }
.url b { font-weight: 400; color: #202124; }
.acts, .exts { display: flex; align-items: center; gap: 16px; }
.exts { margin-left: 15px; }
.exts .i22 { margin: 0 -3px; }
.marks {
  display: grid;
  grid-template-columns: 155px 142px 156px 142px 147px 106px 76px 83px 85px 144px 128px 144px 86px 1fr 20px;
  align-items: center;
  height: 34px;
  padding: 0 12px 4px 14px;
  border-bottom: 1px solid #dadce0;
  color: #3c4043;
}
.marks a { display: flex; align-items: center; gap: 8px; white-space: nowrap; }
.marks button { font-size: 18px; color: #5f6368; }
.page { flex: 1; font: 14px/20px "Liberation Sans", Arial, sans-serif; color: #333; }
.container { width: 100%; max-width: 1170px; margin: 0 auto; padding: 0 15px; }
.navbar { height: 52px; background: #222; border-bottom: 1px solid #080808; color: #9d9d9d; }
.navbar .container { display: flex; align-items: center; justify-content: space-between; height: 50px; }
.navbar nav { display: flex; gap: 30px; }
.brand { font-size: 18px; }
.page h1 { margin: 38px 0 20px; padding-bottom: 9px; border-bottom: 1px solid #eee; font-size: 36px; line-height: 40px; font-weight: 400; }
.breadcrumb { display: flex; gap: 10px; padding: 8px 15px; background: #f5f5f5; border-radius: 4px; color: #777; }
.breadcrumb a { color: #337ab7; }
.breadcrumb i { color: #ccc; font-style: normal; }
.inner { padding: 20px 70px 0; }
.inner form { display: flex; flex-direction: column; align-items: flex-start; width: 440px; }
.inner p { margin: 0 0 10px; }
.inner label { margin-bottom: 5px; font-weight: 700; }
.inner .gap15 { margin-top: 15px; }
.inner .gap10 { margin-top: 10px; }
.field { width: 100%; height: 34px; padding: 6px 12px; border: 1px solid #ccc; border-radius: 4px; box-shadow: inset 0 1px 1px rgba(0,0,0,.08); color: #555; }
.pick { position: relative; }
.pick select { appearance: none; width: 220px; height: 34px; padding: 6px 12px; border: 1px solid #ccc; border-radius: 4px; background: #fff; }
.pick .tri { position: absolute; right: 13px; top: 15px; }
.primary { height: 34px; margin-top: 15px; padding: 0 12px; border: 1px solid #2e6da4; border-radius: 4px; background: #337ab7; color: #fff; }
.inner footer { margin-top: 70px; padding-top: 20px; border-top: 1px solid #eee; }
.shelf { display: flex; align-items: center; height: 55px; padding: 0 12px 0 4px; border-top: 1px solid #dadce0; color: #3c4043; }
.dlitem { display: flex; align-items: center; gap: 15px; width: 233px; height: 42px; padding: 0 16px 0 18px; border-right: 1px solid #d0d0d0; color: #3c4043; }
.dlitem .i12 { margin-left: auto; color: #5f6368; }
.showall { width: 84px; height: 31px; margin-left: auto; border: 1px solid #dadce0; border-radius: 4px; color: #1a73e8; font-size: 13px; }
.shut { width: 12px; margin-left: 12px; color: #5f6368; }

/* Save dialog, floating over the browser */
.dialog { position: absolute; left: 856px; top: 275px; width: 946px; border: 1px solid #6e6e6e; background: #fff; }
.dialog header { display: flex; align-items: center; gap: 7px; height: 30px; padding: 0 10px 0 9px; }
.dialog header button { margin-left: auto; }
.dialog .addrrow { height: 42px; }
.dialog .crumbs { gap: 11px; padding-right: 9px; }
.more { font-size: 14px; color: #555; }
.dialog .reload { width: 34px; }
.dialog .find { width: 202px; }
.cmds { display: flex; align-items: center; gap: 32px; height: 31px; padding: 0 15px 0 18px; background: #f5f6f7; border-bottom: 1px solid #e8eaec; color: #1e395b; }
.cmds button { gap: 6px; font-size: 13px; }
.cmdend { margin-left: auto; display: flex; align-items: center; gap: 9px; }
.cmdend .i16 { margin-left: 21px; }
.browse { display: flex; height: 306px; }
.tree { width: 140px; margin: 0; padding: 0; list-style: none; }
.tree li { display: flex; align-items: center; gap: 6px; height: 24px; padding-left: 24px; white-space: nowrap; overflow: hidden; }
.tree .kid { padding-left: 32px; }
.tree .kid svg { margin-right: -1px; }
.tree .first { margin-bottom: 8px; }
.tree .sel { background: #d9d9d9; }
.scroll { display: flex; flex-direction: column; align-items: center; width: 17px; padding: 4px 0; background: #f0f0f0; color: #505050; }
.thumb { width: 15px; height: 168px; margin: 89px 0 auto; background: #cdcdcd; }
.list { position: relative; flex: 1; margin-left: 3px; }
.list .sort { top: 0; left: 137px; }
.savebox { position: relative; padding: 11px 5px 11px; background: #f0f0f0; }
.line { display: flex; align-items: center; gap: 5px; margin-bottom: 2px; }
.line label { width: 115px; text-align: right; }
.combo { flex: 1; display: flex; align-items: center; justify-content: space-between; height: 23px; padding: 0 4px 0 3px; border: 1px solid #adadad; background: #e1e1e1; color: #333; }
.combo select { appearance: none; flex: 1; }
.focus { border-color: #0078d7; background: #fff; }
.focus input { width: 131px; height: 15px; line-height: 15px; background: #0078d7; color: #fff; }
.final { display: flex; align-items: center; gap: 14px; height: 24px; margin-top: 23px; padding: 0 13px 0 7px; }
.hide { gap: 8px; margin-right: auto; font-size: 13px; }
.btn { width: 86px; height: 24px; border: 1px solid #adadad; background: #e1e1e1; }
.save { border-color: #0078d7; background: #e5f1fb; }
.grip { position: absolute; right: 3px; bottom: 2px; width: 8px; height: 8px; }
```
